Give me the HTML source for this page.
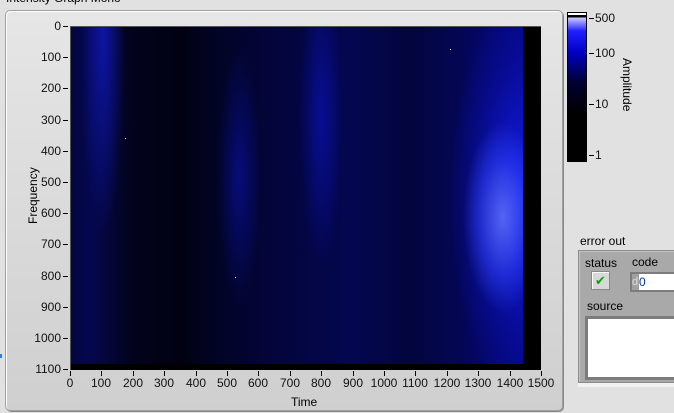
<!DOCTYPE html>
<html><head><style>
*{margin:0;padding:0;box-sizing:border-box}
body{width:674px;height:413px;background:#e1e1e1;position:relative;overflow:hidden;font-family:"Liberation Sans",sans-serif;font-size:12px;color:#000}
.a{position:absolute}
.panel{left:5px;top:10px;width:558px;height:401px;border:1px solid #a0a0a0;border-radius:5px;background:linear-gradient(#e6e6e6,#cfcfcf);box-shadow:inset 1px 1px 0 #fff,1px 1px 0 #888}
.plot{left:70px;top:26px;width:471px;height:344px;background:#000;border-top:1px solid #555;border-left:1px solid #555;overflow:hidden}
.data{left:0;top:0;width:452px;height:337px;background:
radial-gradient(ellipse 40px 95px at 432px 190px,rgba(100,120,255,.8),rgba(50,70,255,.5) 60%,rgba(0,0,0,0) 100%),
radial-gradient(ellipse 75px 200px at 452px 170px,rgba(20,30,240,.9),rgba(10,15,170,.45) 70%,rgba(0,0,0,0) 100%),
radial-gradient(ellipse 22px 150px at 250px 90px,rgba(10,20,200,.6),rgba(0,0,0,0)),
radial-gradient(ellipse 22px 130px at 168px 150px,rgba(10,20,200,.5),rgba(0,0,0,0)),
radial-gradient(ellipse 22px 200px at 32px 10px,rgba(15,25,190,.8),rgba(0,0,0,0)),
linear-gradient(90deg,#030640 0,#05074e 20px,#02031c 60px,#010112 110px,#020320 135px,#03053a 200px,#040650 280px,#03053e 340px,#040654 390px,#05088a 452px)}
.tick{position:absolute;background:#000}
.lbl{position:absolute;font-size:12px;color:#111}
</style></head><body>
<div class="a" style="left:6px;top:-9px;font-size:12px">Intensity Graph Mono</div>
<div class="a panel"></div>
<div class="a plot"><div class="a data"></div>
<div class="a" style="left:54px;top:111px;width:1px;height:1px;background:#fff"></div>
<div class="a" style="left:379px;top:22px;width:1px;height:1px;background:#fff"></div>
<div class="a" style="left:164px;top:250px;width:1px;height:1px;background:#fff"></div>
</div>
<div id="ax"></div>
<div class="a" style="left:291px;top:395px">Time</div>
<div class="a" style="left:26px;top:224px;transform:rotate(-90deg);transform-origin:0 0">Frequency</div>
<div class="a" style="left:567px;top:12px;width:20px;height:150px;border:1px solid #000;background:linear-gradient(#fff 0,#fff 2px,#000 2px,#000 4px,#c8c8ff 5px,#2020ff 18px,#0000c0 40px,#000030 70px,#000 100px,#000)"></div>
<div class="a" style="left:589px;top:18px;width:5px;height:1px;background:#000"></div>
<div class="a" style="left:589px;top:53px;width:5px;height:1px;background:#000"></div>
<div class="a" style="left:589px;top:104px;width:5px;height:1px;background:#000"></div>
<div class="a" style="left:589px;top:155px;width:5px;height:1px;background:#000"></div>
<div class="lbl" style="left:595px;top:11px">500</div>
<div class="lbl" style="left:595px;top:46px">100</div>
<div class="lbl" style="left:595px;top:97px">10</div>
<div class="lbl" style="left:595px;top:148px">1</div>
<div class="a" style="left:634px;top:58px;transform:rotate(90deg);transform-origin:0 0">Amplitude</div>
<div class="a" style="left:580px;top:234px">error out</div>
<div class="a" style="left:578px;top:250px;width:100px;height:133px;background:#a9a9a9;border:1px solid #8a8a8a;box-shadow:inset 1px 1px 0 #c4c4c4"></div>
<div class="a" style="left:578px;top:383px;width:100px;height:4px;background:#f2f2f2"></div>
<div class="a" style="left:585px;top:256px">status</div>
<div class="a" style="left:632px;top:255px">code</div>
<div class="a" style="left:591px;top:271px;width:19px;height:19px;background:#d8d8d8;border:1px solid #888;box-shadow:inset 1px 1px 0 #fff;color:#0a0;font-size:13px;text-align:center;line-height:17px">✔</div>
<div class="a" style="left:630px;top:272px;width:50px;height:20px;background:#7c7c7c"></div>
<div class="a" style="left:632px;top:274px;width:7px;height:16px;background:#a0a0a0;color:#ddd;font-size:11px;line-height:16px">d</div>
<div class="a" style="left:639px;top:274px;width:40px;height:16px;background:#fff;color:#03a;line-height:16px">0</div>
<div class="a" style="left:587px;top:299px">source</div>
<div class="a" style="left:585px;top:316px;width:95px;height:64px;background:#7c7c7c"></div>
<div class="a" style="left:588px;top:319px;width:90px;height:58px;background:#fff"></div>
<div class="a" style="left:0;top:354px;width:2px;height:4px;background:#2a7fd8"></div>
<script>
var ax=document.getElementById('ax'),h='';
for(var i=0;i<=11;i++){var y=Math.round(26+i*31.2);h+='<div class="tick" style="left:63px;top:'+y+'px;width:5px;height:1px"></div><div class="lbl" style="right:613px;top:'+(y-7)+'px">'+(i*100)+'</div>';}
for(var j=0;j<=15;j++){var x=Math.round(70+j*31.4);h+='<div class="tick" style="left:'+x+'px;top:371px;width:1px;height:5px"></div><div class="lbl" style="left:'+(x-30)+'px;width:60px;text-align:center;top:376px">'+(j*100)+'</div>';}
ax.innerHTML=h;
</script>
</body></html>
